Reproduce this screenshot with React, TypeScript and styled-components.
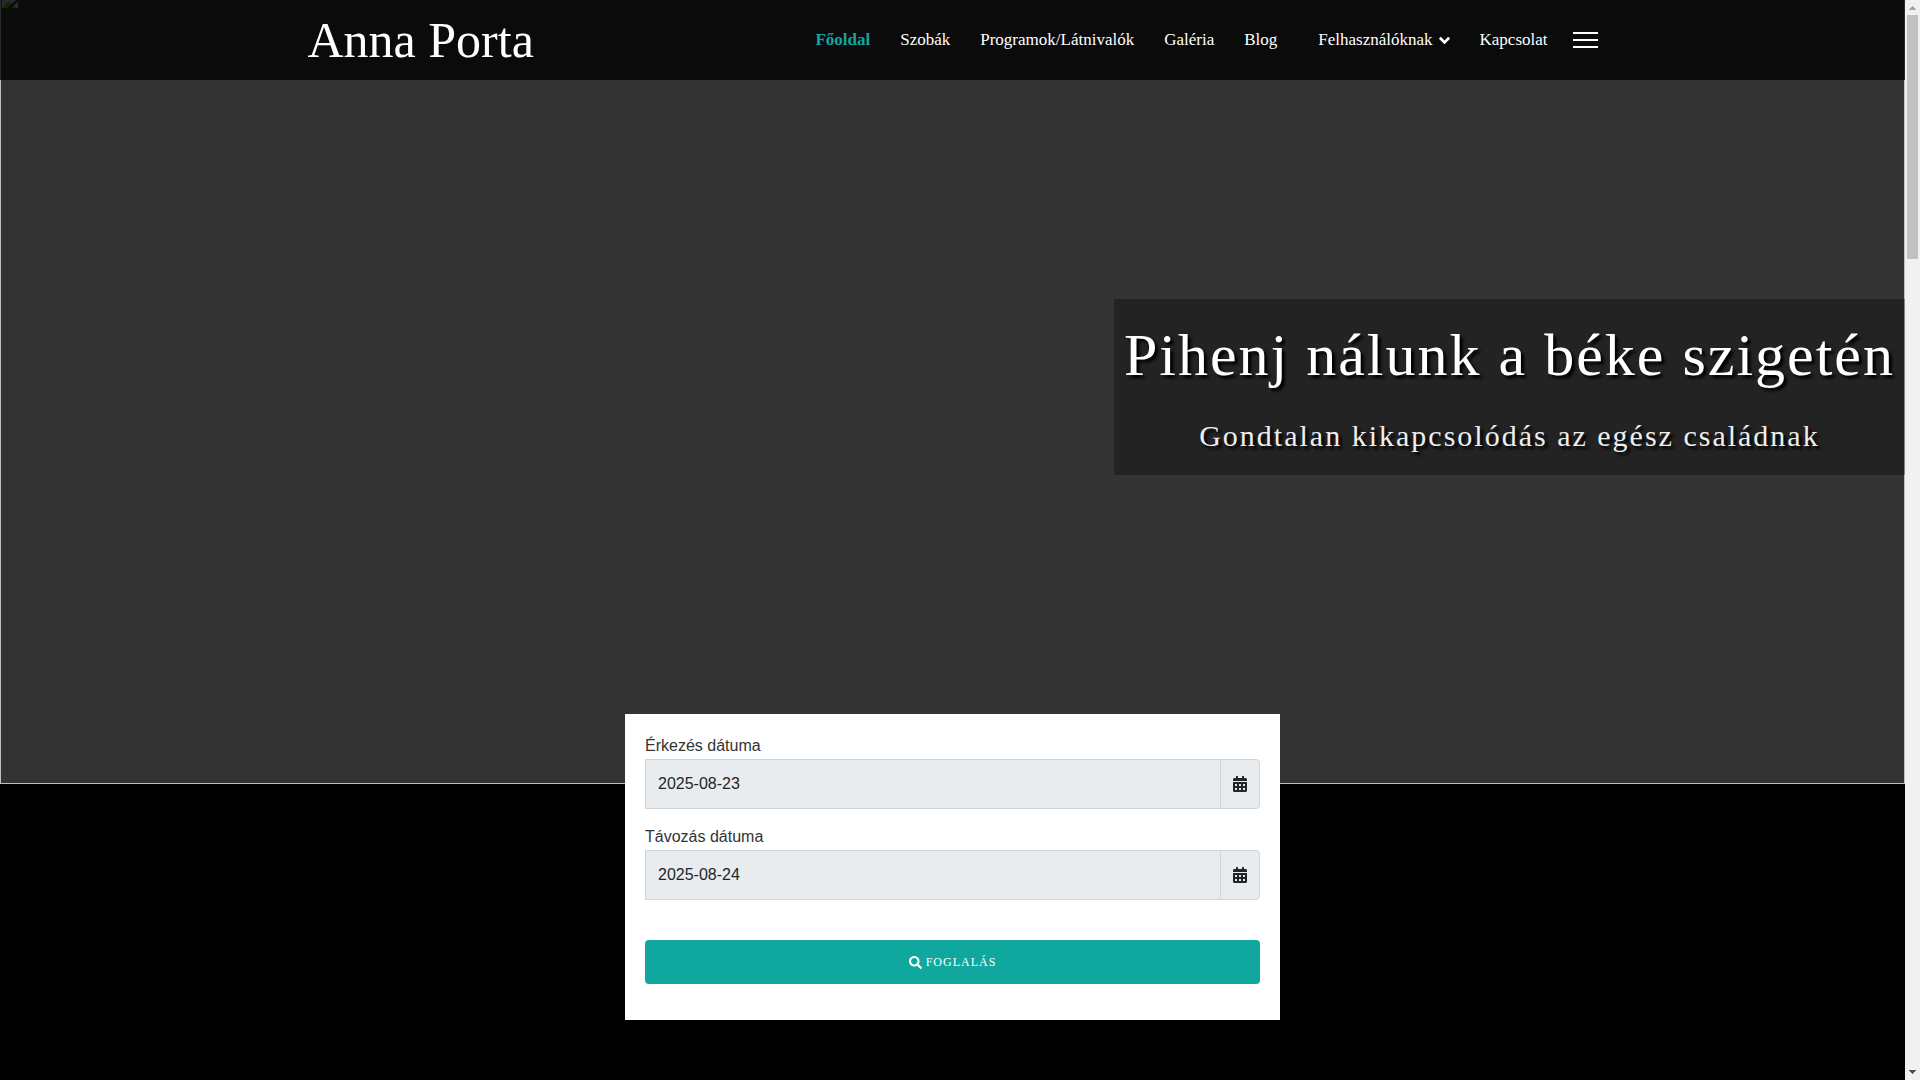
import React from 'react';
import styled, { createGlobalStyle } from 'styled-components';
import { FaCalendarAlt, FaSearch } from 'react-icons/fa';

const serif = `'Liberation Serif', 'Times New Roman', serif`;
const sans = `'Liberation Sans', Arial, sans-serif`;
const teal = '#10a89e';

const GlobalStyle = createGlobalStyle`
  *, *::before, *::after { box-sizing: border-box; }
  body { margin: 0; background: #000; font-family: ${sans}; font-size: 16px; }
  h1, p { margin: 0; }
`;

const Shell = styled.div`
  display: grid;
  grid-template-columns: minmax(0, 1fr) 15px;
  min-height: 100vh;
`;

const Page = styled.div`
  position: relative;
  min-width: 0;
`;

const Header = styled.header`
  position: absolute;
  top: 0;
  left: 0;
  right: 0;
  z-index: 2;
  background: rgba(0, 0, 0, 0.78);
`;

const HeaderInner = styled.div`
  display: flex;
  align-items: center;
  justify-content: space-between;
  max-width: 1320px;
  height: 80px;
  margin: 0 auto;
  padding: 0 15px;
`;

const Brand = styled.a`
  color: #fff;
  font: 50px/60px ${serif};
  text-decoration: none;
`;

const Nav = styled.nav`
  display: flex;
  align-items: center;
  gap: 25px;
`;

const Menu = styled.ul`
  display: flex;
  gap: 30px;
  margin: 0;
  padding: 0;
  list-style: none;
`;

const MenuItem = styled.li<{ $spaced?: boolean }>`
  padding-left: ${(p) => (p.$spaced ? '11px' : '0')};
`;

const MenuLink = styled.a<{ $active?: boolean }>`
  display: flex;
  align-items: center;
  gap: 6px;
  color: ${(p) => (p.$active ? teal : '#fff')};
  font: ${(p) => (p.$active ? 700 : 400)} 17px/24px ${serif};
  text-decoration: none;
`;

const Burger = styled.button`
  display: flex;
  flex-direction: column;
  gap: 5px;
  padding: 0;
  border: 0;
  background: none;
  cursor: pointer;
`;

const BurgerLine = styled.span`
  width: 25px;
  height: 2px;
  background: #fff;
`;

const Hero = styled.section`
  position: relative;
  display: flex;
  align-items: center;
  justify-content: flex-end;
  height: 784px;
  padding-bottom: 10px;
  background: #333;
  box-shadow: inset 1px 0 #c0c0c0, inset -1px 0 #c0c0c0, inset 0 -1px #c0c0c0;
`;

const MissingImage = styled.svg`
  position: absolute;
  top: 0;
  left: 2px;
`;

const Caption = styled.div`
  display: flex;
  flex-direction: column;
  gap: 27px;
  padding: 20px 10px 21px;
  background: rgba(0, 0, 0, 0.3);
  color: #fff;
  font-family: ${serif};
  letter-spacing: 2px;
  text-align: center;
  text-shadow: 3px 3px 3px #000;
`;

const Title = styled.h1`
  font-size: 60px;
  font-weight: 400;
  line-height: 72px;
`;

const Subtitle = styled.p`
  color: #eee;
  font-size: 30px;
  line-height: 36px;
`;

const Booking = styled.form`
  position: relative;
  max-width: 655px;
  margin: -70px auto 0;
  padding: 20px 20px 36px;
  background: #fff;
`;

const Field = styled.div`
  margin-bottom: 16px;
`;

const Label = styled.label`
  display: block;
  margin-bottom: 2px;
  color: #333;
  line-height: 23px;
`;

const InputGroup = styled.div`
  display: flex;
  height: 50px;
`;

const DateInput = styled.input`
  flex: 1;
  min-width: 0;
  padding: 0 12px;
  border: 1px solid #ced4da;
  border-radius: 0;
  background: #e9ecef;
  color: #212529;
  font: 16px/24px ${sans};
`;

const CalendarButton = styled.button`
  display: flex;
  align-items: center;
  justify-content: center;
  width: 40px;
  margin-left: -1px;
  padding: 0;
  border: 1px solid #ced4da;
  border-radius: 0 4px 4px 0;
  background: #e9ecef;
  color: #212529;
  font-size: 16px;
`;

const Submit = styled.button`
  display: flex;
  align-items: center;
  justify-content: center;
  gap: 4px;
  width: 100%;
  height: 44px;
  margin-top: 40px;
  padding: 0;
  border: 0;
  border-radius: 4px;
  background: ${teal};
  color: #fff;
  font: 12px/18px ${serif};
  letter-spacing: 1px;
`;

const Scrollbar = styled.div`
  display: flex;
  flex-direction: column;
  align-items: center;
  height: 100vh;
  background: #f1f1f1;
`;

const ScrollArrow = styled.svg`
  display: block;
  width: 15px;
  height: 15px;
`;

const ScrollTrack = styled.div`
  flex: 1;
`;

const ScrollThumb = styled.div`
  width: 11px;
  height: 244px;
  background: #c1c1c1;
`;

type Item = { label: string; active?: boolean; spaced?: boolean; dropdown?: boolean };

const items: Item[] = [
  { label: 'Főoldal', active: true },
  { label: 'Szobák' },
  { label: 'Programok/Látnivalók' },
  { label: 'Galéria' },
  { label: 'Blog' },
  { label: 'Felhasználóknak', spaced: true, dropdown: true },
  { label: 'Kapcsolat' },
];

const AngleDown = () => (
  <svg width="11" height="17" viewBox="0 0 320 512" fill="currentColor" aria-hidden="true">
    <path d="M143 352.3L7 216.3c-9.4-9.4-9.4-24.6 0-33.9l22.6-22.6c9.4-9.4 24.6-9.4 33.9 0l96.4 96.4 96.4-96.4c9.4-9.4 24.6-9.4 33.9 0l22.6 22.6c9.4 9.4 9.4 24.6 0 33.9l-136 136c-9.2 9.4-24.4 9.4-33.8 0z" />
  </svg>
);

const DateField = ({ id, label, value }: { id: string; label: string; value: string }) => (
  <Field>
    <Label htmlFor={id}>{label}</Label>
    <InputGroup>
      <DateInput id={id} type="text" defaultValue={value} readOnly />
      <CalendarButton type="button" aria-label={label}>
        <FaCalendarAlt />
      </CalendarButton>
    </InputGroup>
  </Field>
);

export default function App() {
  return (
    <>
      <GlobalStyle />
      <Shell>
        <Page>
          <Header>
            <HeaderInner>
              <Brand href="#">Anna Porta</Brand>
              <Nav>
                <Menu>
                  {items.map((item) => (
                    <MenuItem key={item.label} $spaced={item.spaced}>
                      <MenuLink href="#" $active={item.active}>
                        {item.label}
                        {item.dropdown && <AngleDown />}
                      </MenuLink>
                    </MenuItem>
                  ))}
                </Menu>
                <Burger type="button" aria-label="Menü">
                  <BurgerLine />
                  <BurgerLine />
                  <BurgerLine />
                </Burger>
              </Nav>
            </HeaderInner>
          </Header>
          <main>
            <Hero>
              <MissingImage width="16" height="8" viewBox="0 0 16 8" aria-hidden="true">
                <path d="M0 0h16v8H0z" fill="#b4bfdc" />
                <path d="M1 8c1-4 3-6 6-6s5 2 6 6z" fill="#4fae1e" />
                <path d="M14 0h2v1L9 8H6z" fill="#222" />
              </MissingImage>
              <Caption>
                <Title>Pihenj nálunk a béke szigetén</Title>
                <Subtitle>Gondtalan kikapcsolódás az egész családnak</Subtitle>
              </Caption>
            </Hero>
            <Booking>
              <DateField id="arrival" label="Érkezés dátuma" value="2025-08-23" />
              <DateField id="departure" label="Távozás dátuma" value="2025-08-24" />
              <Submit type="button">
                <FaSearch size={13} />
                FOGLALÁS
              </Submit>
            </Booking>
          </main>
        </Page>
        <Scrollbar aria-hidden="true">
          <ScrollArrow viewBox="0 0 15 15" shapeRendering="crispEdges">
            <path d="M4 10h7L7.500 6z" fill="#a3a3a3" />
          </ScrollArrow>
          <ScrollTrack>
            <ScrollThumb />
          </ScrollTrack>
          <ScrollArrow viewBox="0 0 15 15" shapeRendering="crispEdges">
            <path d="M4 5h7L7.500 9z" fill="#505050" />
          </ScrollArrow>
        </Scrollbar>
      </Shell>
    </>
  );
}
